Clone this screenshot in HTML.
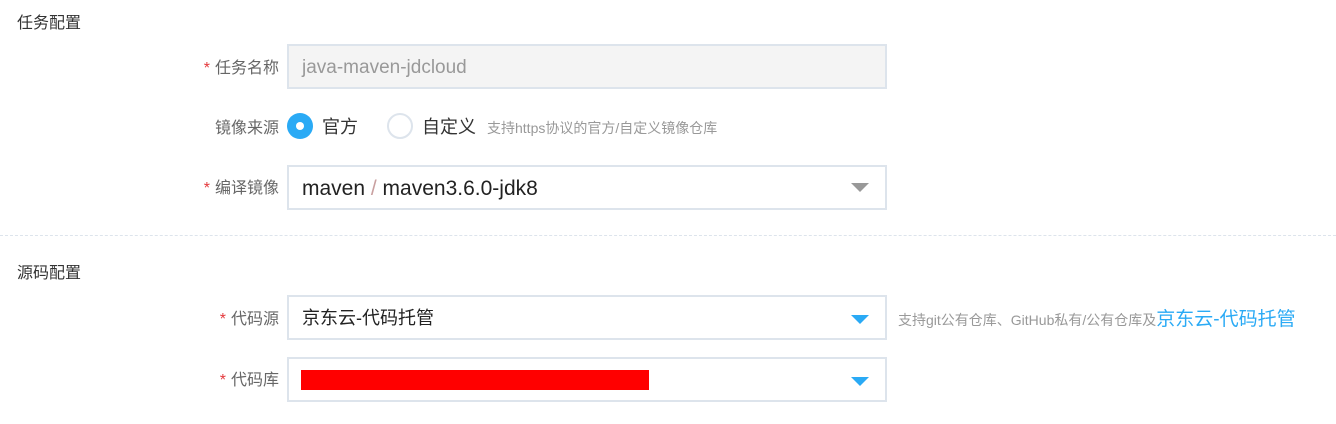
<!DOCTYPE html>
<html><head><meta charset="utf-8"><style>
body{margin:0;width:1336px;height:424px;background:#fff;font-family:"Liberation Sans","Noto Sans CJK SC",sans-serif;position:relative;overflow:hidden;color:#333}
.a{position:absolute;white-space:nowrap;line-height:1}
.t{font-size:16px;color:#333}
.l{font-size:16px;color:#666;right:1057px;text-align:right}
.l b{color:#e4393c;font-weight:normal;margin-right:5px}
.in{position:absolute;left:287px;border:2px solid #dde4ec;background:#fff;box-sizing:border-box;width:600px}
.tri{position:absolute;right:16px;width:0;height:0;border-left:9px solid transparent;border-right:9px solid transparent;border-top:9px solid #2aaaf5}
</style></head><body>
<div class="a t" style="left:17px;top:16px">任务配置</div>
<div class="a l" style="top:61px"><b>*</b>任务名称</div>
<div class="in" style="top:44px;height:45px;background:#f4f4f4"><span class="a" style="left:13px;top:12px;font-size:19px;color:#999">java-maven-jdcloud</span></div>
<div class="a l" style="top:121px">镜像来源</div>
<div class="a" style="left:287px;top:113px;width:26px;height:26px;border-radius:50%;background:#2aaaf5"></div>
<div class="a" style="left:296px;top:122px;width:8px;height:8px;border-radius:50%;background:#fff"></div>
<div class="a" style="left:322px;top:118px;font-size:18px">官方</div>
<div class="a" style="left:387px;top:113px;width:22px;height:22px;border-radius:50%;border:2px solid #dde4ec"></div>
<div class="a" style="left:422px;top:118px;font-size:18px">自定义</div>
<div class="a" style="left:487px;top:121px;font-size:14px;color:#999">支持https协议的官方/自定义镜像仓库</div>
<div class="a l" style="top:181px"><b>*</b>编译镜像</div>
<div class="in" style="top:165px;height:45px"><span class="a" style="left:13px;top:11px;font-size:21px;color:#222">maven <span style="color:#c9a0a0">/</span> maven3.6.0-jdk8</span><div class="tri" style="top:16px;border-top-color:#999"></div></div>
<div class="a" style="left:0;top:235px;width:1336px;border-top:1px dashed #dde4ec"></div>
<div class="a t" style="left:17px;top:266px">源码配置</div>
<div class="a l" style="top:312px"><b>*</b>代码源</div>
<div class="in" style="top:295px;height:45px"><span class="a" style="left:13px;top:12px;font-size:18px;color:#222">京东云-代码托管</span><div class="tri" style="top:18px"></div></div>
<div class="a" style="left:898px;top:310px;font-size:14px;color:#999">支持git公有仓库、GitHub私有/公有仓库及<span style="font-size:19px;color:#2aaaf5">京东云-代码托管</span></div>
<div class="a l" style="top:373px"><b>*</b>代码库</div>
<div class="in" style="top:357px;height:45px"><div class="a" style="left:12px;top:11px;width:348px;height:20px;background:#f00"></div><div class="tri" style="top:18px"></div></div>
</body></html>
